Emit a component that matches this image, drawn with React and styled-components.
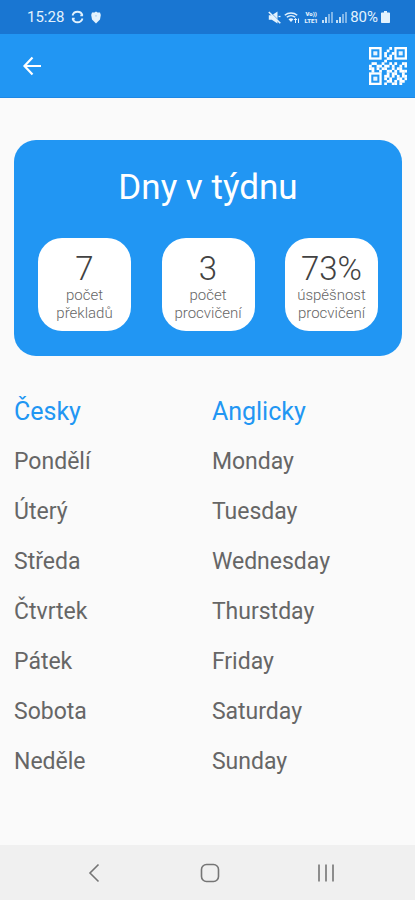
import React from 'react';
import styled, { createGlobalStyle } from 'styled-components';

const GlobalStyle = createGlobalStyle`
  * {
    box-sizing: border-box;
  }

  body {
    margin: 0;
    background: #fafafa;
    font-family: Roboto, 'Noto Sans', sans-serif;
  }
`;

const Screen = styled.div`
  display: flex;
  flex-direction: column;
  min-height: 100vh;
`;

const StatusBar = styled.div`
  display: flex;
  align-items: center;
  justify-content: space-between;
  height: 34px;
  padding: 0 25px 0 27px;
  background: #1976d2;
  color: #e3f2fd;
  font-size: 15px;
  line-height: 18px;
`;

const StatusGroup = styled.div`
  display: flex;
  align-items: center;
  gap: ${({ $gap }) => $gap}px;
`;

const VolteLabel = styled.span`
  display: flex;
  flex-direction: column;
  align-items: center;
  min-width: 16px;
  font-size: 6px;
  font-weight: 900;
  line-height: 7px;
`;

const AppBar = styled.header`
  display: flex;
  align-items: center;
  justify-content: space-between;
  height: 64px;
  padding: 0 8px 0 20px;
  background: #2196f3;
  border-bottom: 1px solid #1e88e5;
`;

const IconButton = styled.button`
  display: flex;
  padding: 0;
  border: none;
  background: none;
  color: ${({ $color }) => $color || '#ffffff'};
  cursor: pointer;
`;

const Content = styled.main`
  flex: 1;
  padding: 42px 13px 0 14px;
`;

const Card = styled.section`
  padding: 27px 24px 25px;
  border-radius: 22px;
  background: #2196f3;
`;

const CardTitle = styled.h1`
  margin: 0 0 29px;
  color: #ffffff;
  font-size: 35px;
  font-weight: 400;
  line-height: 42px;
  text-align: center;
`;

const Stats = styled.div`
  display: flex;
  justify-content: space-between;
`;

const Stat = styled.div`
  display: flex;
  flex-direction: column;
  align-items: center;
  width: 93px;
  height: 93px;
  padding-top: 14px;
  border-radius: 24px;
  background: #ffffff;
  text-align: center;
`;

const StatValue = styled.span`
  color: #424242;
  font-size: 33px;
  font-weight: 300;
  line-height: 34px;
`;

const StatLabel = styled.span`
  color: #666666;
  font-size: 15px;
  font-weight: 300;
  line-height: 18px;
  white-space: pre-line;
`;

const WordTable = styled.table`
  width: 100%;
  margin-top: 30px;
  border-collapse: collapse;
  table-layout: fixed;
  font-size: 23px;
  line-height: 28px;
  text-align: left;
`;

const HeadCell = styled.th`
  width: ${({ $width }) => $width};
  height: 51px;
  padding: 0;
  color: #2196f3;
  font-size: 25px;
  font-weight: 400;
`;

const Cell = styled.td`
  height: 50px;
  padding: 0;
  color: #666666;
`;

const NavBar = styled.nav`
  display: flex;
  align-items: center;
  justify-content: space-around;
  height: 55px;
  padding: 0 31px 0 36px;
  background: #f0f0f0;
`;

const stats = [
  { value: '7', label: 'počet\npřekladů' },
  { value: '3', label: 'počet\nprocvičení' },
  { value: '73%', label: 'úspěšnost\nprocvičení' },
];

const words = [
  ['Pondělí', 'Monday'],
  ['Úterý', 'Tuesday'],
  ['Středa', 'Wednesday'],
  ['Čtvrtek', 'Thurstday'],
  ['Pátek', 'Friday'],
  ['Sobota', 'Saturday'],
  ['Neděle', 'Sunday'],
];

// the three corner squares are drawn separately
const qrRows = [
  '........1......',
  '.......1.......',
  '......1..1.....',
  '......1.1......',
  '.......11......',
  '......1........',
  '.11..1..1.1..11',
  '1..11.11.1..1.1',
  '11.1.11..1.11..',
  '.1..1..11.1.111',
  '.......1.11..1.',
  '......11.1.1.11',
  '......1.1..11.1',
  '.......11.1.11.',
  '......1..11.1..',
];

const qrCorners = [
  [0, 0],
  [10, 0],
  [0, 10],
];

const QrIcon = () => (
  <svg width="38" height="38" viewBox="0 0 15 15" fill="currentColor" aria-hidden="true">
    {qrCorners.map(([x, y]) => (
      <g key={`${x}-${y}`}>
        <rect x={x + 0.45} y={y + 0.45} width="4.1" height="4.1" fill="none" stroke="currentColor" strokeWidth=".9" />
        <rect x={x + 1.7} y={y + 1.7} width="1.6" height="1.6" opacity=".9" />
      </g>
    ))}
    {qrRows.map((row, y) =>
      [...row].map((bit, x) =>
        bit === '1' ? <rect key={`${x}-${y}`} x={x} y={y} width="1.1" height="1.1" /> : null
      )
    )}
  </svg>
);

const BackIcon = () => (
  <svg width="24" height="24" viewBox="0 0 24 24" fill="none" stroke="currentColor" strokeWidth="2.2" aria-hidden="true">
    <path d="M21 12H5M12.5 3.5L4.5 12l8 8.5" />
  </svg>
);

const SyncIcon = () => (
  <svg width="13" height="14" viewBox="0 0 13 14" fill="none" stroke="currentColor" strokeWidth="1.8" aria-hidden="true">
    <path d="M1.5 5.5a5.2 5.2 0 0 1 10 0M1.5 8.5a5.2 5.2 0 0 0 10 0" />
    <path d="M9.3 5.3h2.6M1.1 8.7h2.6" />
  </svg>
);

const ShieldIcon = () => (
  <svg width="10" height="13" viewBox="0 0 10 13" fill="currentColor" aria-hidden="true">
    <path d="M5 .5l1.5 1L9 1.4l.8 2.6L9 8.5 5 12.5 1 8.5.2 4 1 1.4l2.5.1z" />
    <path d="M4 4.5l1 .8 1-.8" fill="none" stroke="#90bfe9" strokeWidth=".7" />
  </svg>
);

const MuteIcon = () => (
  <svg width="13" height="13" viewBox="0 0 13 13" fill="currentColor" aria-hidden="true">
    <path d="M.8 4.2h3L9.5.5v12L3.8 8.8h-3z" />
    <path d="M2 .8l11 11" stroke="#1976d2" strokeWidth=".8" />
    <path d="M.8 1l11.500 11.200" stroke="currentColor" strokeWidth="1.6" />
    <path d="M10.500 5.500h2" stroke="currentColor" strokeWidth="1.3" />
  </svg>
);

const WifiIcon = () => (
  <svg width="16" height="13" viewBox="0 0 16 13" fill="none" stroke="currentColor" strokeWidth="1.5" aria-hidden="true">
    <path d="M.8 4.2a9.5 9.5 0 0 1 12.4 0M2.8 6.3a6.5 6.5 0 0 1 8.4 0" />
    <path d="M4.5 8.2a4 4 0 0 1 5 0L7 11z" fill="currentColor" stroke="none" />
    <path d="M11.5 12V7.5M10 9l1.5-1.6L13 9M14.5 7.5V12" strokeWidth="1" />
  </svg>
);

const SignalIcon = () => (
  <svg width="11" height="12" viewBox="0 0 11 12" fill="currentColor" aria-hidden="true">
    <path d="M0 9h2v3H0zM3 6h2v6H3z" opacity=".85" />
    <path d="M6 3h2v9H6zM9 1h2v11H9z" opacity=".5" />
  </svg>
);

const BatteryIcon = () => (
  <svg width="9" height="12" viewBox="0 0 9 12" fill="currentColor" aria-hidden="true">
    <path d="M3 0h3v1.5h2.2a.8.8 0 0 1 .8.8v8.9a.8.8 0 0 1-.8.8H.8a.8.8 0 0 1-.8-.8V2.3a.8.8 0 0 1 .8-.8H3z" />
  </svg>
);

const NavBackIcon = () => (
  <svg width="20" height="20" viewBox="0 0 20 20" fill="none" stroke="currentColor" strokeWidth="1.6" aria-hidden="true">
    <path d="M14.5 1.5L6 10l8.5 8.5" />
  </svg>
);

const NavHomeIcon = () => (
  <svg width="20" height="20" viewBox="0 0 20 20" fill="none" stroke="currentColor" strokeWidth="1.6" aria-hidden="true">
    <rect x="1.5" y="1.5" width="17" height="17" rx="5" />
  </svg>
);

const NavRecentsIcon = () => (
  <svg width="20" height="20" viewBox="0 0 20 20" fill="none" stroke="currentColor" strokeWidth="1.6" aria-hidden="true">
    <path d="M3 1.5v17M10 1.5v17M17 1.5v17" />
  </svg>
);

const App = () => (
  <Screen>
    <GlobalStyle />
    <StatusBar>
      <StatusGroup $gap={7}>
        <span>15:28</span>
        <SyncIcon />
        <ShieldIcon />
      </StatusGroup>
      <StatusGroup $gap={3}>
        <MuteIcon />
        <WifiIcon />
        <VolteLabel>
          <span>Vo))</span>
          <span>LTE1</span>
        </VolteLabel>
        <SignalIcon />
        <SignalIcon />
        <span>80%</span>
        <BatteryIcon />
      </StatusGroup>
    </StatusBar>
    <AppBar>
      <IconButton type="button" aria-label="Zpět">
        <BackIcon />
      </IconButton>
      <IconButton type="button" aria-label="QR kód">
        <QrIcon />
      </IconButton>
    </AppBar>
    <Content>
      <Card>
        <CardTitle>Dny v týdnu</CardTitle>
        <Stats>
          {stats.map(({ value, label }) => (
            <Stat key={value}>
              <StatValue>{value}</StatValue>
              <StatLabel>{label}</StatLabel>
            </Stat>
          ))}
        </Stats>
      </Card>
      <WordTable>
        <thead>
          <tr>
            <HeadCell $width="51%">Česky</HeadCell>
            <HeadCell>Anglicky</HeadCell>
          </tr>
        </thead>
        <tbody>
          {words.map(([czech, english]) => (
            <tr key={czech}>
              <Cell>{czech}</Cell>
              <Cell>{english}</Cell>
            </tr>
          ))}
        </tbody>
      </WordTable>
    </Content>
    <NavBar>
      <IconButton type="button" aria-label="Zpět" $color="#757575">
        <NavBackIcon />
      </IconButton>
      <IconButton type="button" aria-label="Domů" $color="#757575">
        <NavHomeIcon />
      </IconButton>
      <IconButton type="button" aria-label="Poslední aplikace" $color="#757575">
        <NavRecentsIcon />
      </IconButton>
    </NavBar>
  </Screen>
);

export default App;
